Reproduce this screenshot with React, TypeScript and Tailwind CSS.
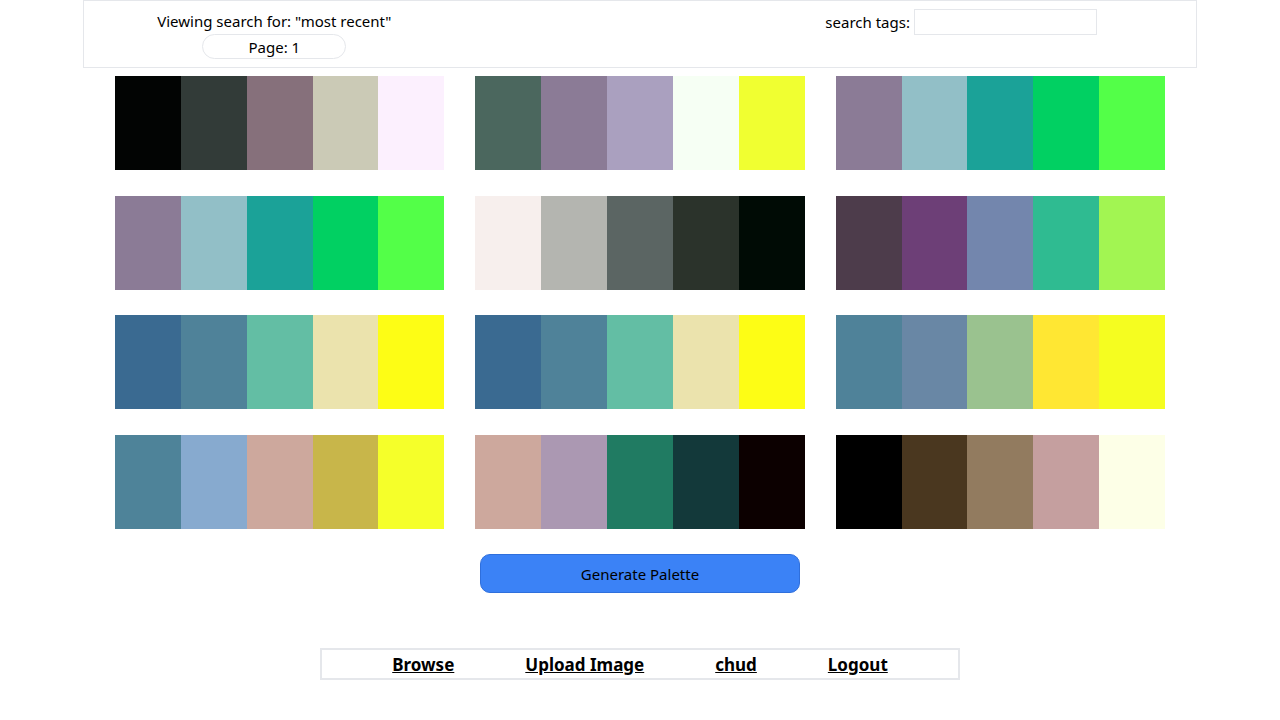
import React from "react";

const palettes: string[][] = [
  ["#020403", "#323b38", "#86707b", "#cbcab6", "#fcf0fe"],
  ["#4b675e", "#8b7b96", "#aaa0bf", "#f6fff4", "#f0ff31"],
  ["#8b7b96", "#92bfc7", "#1ba298", "#01d062", "#53ff48"],
  ["#8b7b96", "#92bfc7", "#1ba298", "#01d062", "#53ff48"],
  ["#f7efed", "#b4b5b0", "#5b6563", "#2b332b", "#000b05"],
  ["#4d3c4b", "#6d3f77", "#7386ad", "#2fbb91", "#a2f552"],
  ["#3a6a91", "#4f8299", "#63bea4", "#ebe3ad", "#fdfd15"],
  ["#3a6a91", "#4f8299", "#63bea4", "#ebe3ad", "#fdfd15"],
  ["#4f8299", "#6987a5", "#9ac28f", "#ffe733", "#f5fd20"],
  ["#4e8399", "#87aacf", "#cda89d", "#c8b64a", "#f5ff2a"],
  ["#cda89d", "#ab98b2", "#207b62", "#13393a", "#0c0000"],
  ["#000000", "#4a371f", "#927b5f", "#c59f9f", "#fdffe7"],
];

export default function App() {
  return (
    <div
      className="w-[1280px] h-[720px] bg-white text-black flex flex-col items-center"
      style={{ fontFamily: '"Noto Sans", "Open Sans", sans-serif' }}
    >
      <header className="w-[1114px] h-[68px] border border-[#e5e7eb] grid grid-cols-3 text-[15px] leading-[20px]">
        <div className="flex flex-col items-center pt-[10px] pl-[10px]">
          <div>Viewing search for: "most recent"</div>
          <div className="mt-[3px] w-[144px] h-[25px] rounded-full border border-[#e5e7eb] flex items-center justify-center">
            Page: 1
          </div>
        </div>
        <div />
        <div className="flex items-start pt-[8px]">
          <label className="flex items-center gap-[4px]">
            <span className="-mt-[1px]">search tags:</span>
            <input
              type="text"
              className="w-[183px] h-[26px] border border-[#e5e7eb] outline-none px-1"
            />
          </label>
        </div>
      </header>

      <div className="mt-[8px] w-[1050px] grid grid-cols-3 gap-x-[31px] gap-y-[25.5px]">
        {palettes.map((p, i) => (
          <div key={i} className="flex h-[94px]">
            {p.map((c, j) => (
              <div key={j} className="flex-1" style={{ backgroundColor: c }} />
            ))}
          </div>
        ))}
      </div>

      <button className="mt-[25px] w-[320px] h-[39px] pt-[2px] rounded-[10px] bg-[#3b82f6] border border-[#2f6fdc] text-[15px] text-black">
        Generate Palette
      </button>

      <nav className="mt-[55px] w-[640px] h-[32px] pt-[2px] border-2 border-[#e5e7eb] flex items-center justify-center gap-[71px] text-[17px] font-bold">
        <a href="#" className="underline">Browse</a>
        <a href="#" className="underline">Upload Image</a>
        <a href="#" className="underline">chud</a>
        <a href="#" className="underline">Logout</a>
      </nav>
    </div>
  );
}
